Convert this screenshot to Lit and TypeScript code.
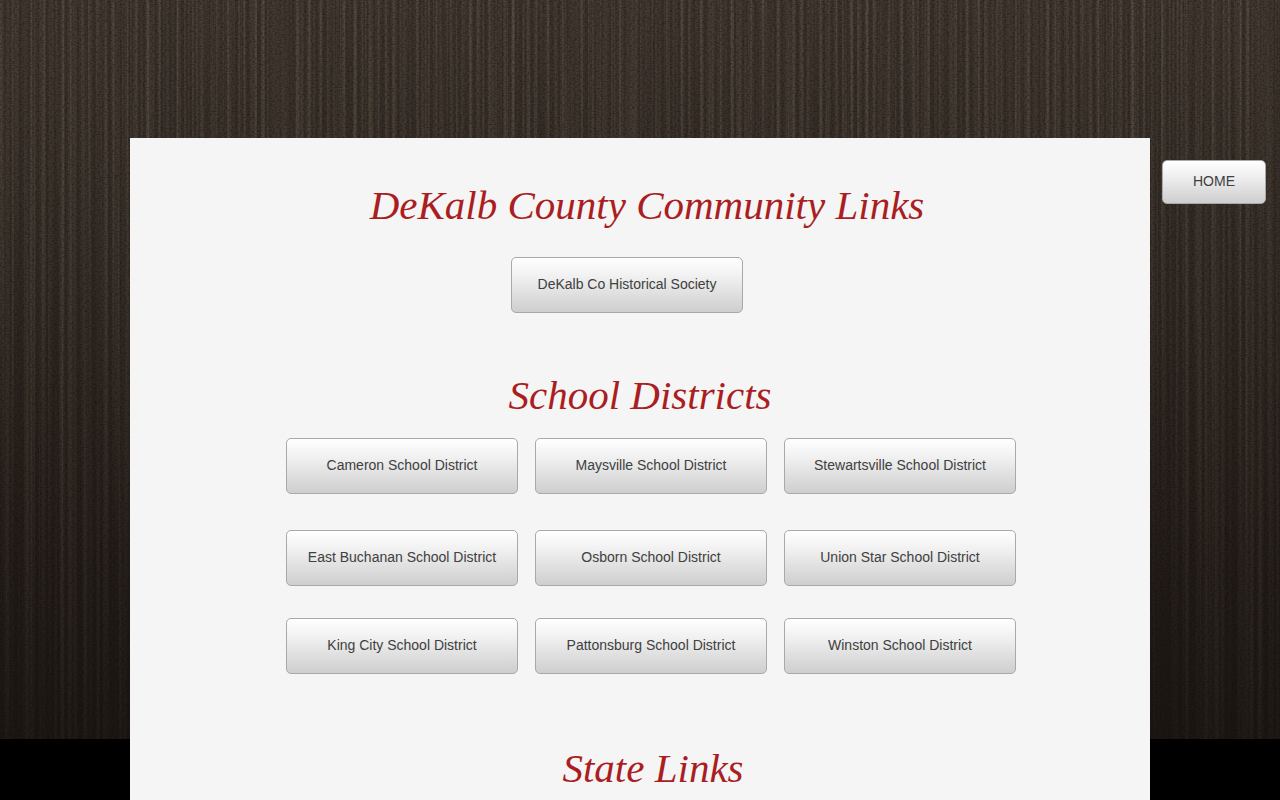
import { LitElement, html, css } from "lit";
import { customElement } from "lit/decorators.js";

const DISTRICTS = [
  "Cameron School District",
  "Maysville School District",
  "Stewartsville School District",
  "East Buchanan School District",
  "Osborn School District",
  "Union Star School District",
  "King City School District",
  "Pattonsburg School District",
  "Winston School District",
];

@customElement("app-root")
export class AppRoot extends LitElement {
  static styles = css`
    :host {
      display: block;
      font-family: "Liberation Sans", Arial, sans-serif;
    }
    .page {
      display: grid;
      grid-template-columns: minmax(0, 1fr);
      min-height: 100vh;
      background: #000;
    }
    .wood,
    .layout {
      grid-area: 1 / 1;
    }
    .wood {
      display: block;
      width: 100%;
      height: 739px;
    }
    .layout {
      position: relative;
      display: grid;
      grid-template-columns: minmax(0, 1fr) minmax(0, 1020px) minmax(0, 1fr);
      padding-top: 138px;
    }
    .panel {
      grid-column: 2;
      background: #f5f5f5;
      padding-top: 40px;
    }
    .side {
      grid-column: 3;
      padding: 22px 0 0 12px;
    }
    h1,
    h2 {
      margin: 0;
      font: italic 400 41px/54px "Liberation Serif", "Times New Roman", serif;
      color: #aa1e22;
      text-align: center;
    }
    .title {
      padding-left: 14px;
    }
    .state {
      padding-left: 26px;
    }
    .single {
      display: flex;
      justify-content: center;
      padding: 25px 26px 55px 0;
    }
    .districts {
      display: grid;
      grid-template-columns: repeat(3, 232px);
      grid-template-rows: 60px 56px 56px;
      align-items: start;
      justify-content: center;
      gap: 32px 17px;
      padding: 16px 0 67px 22px;
    }
    .btn {
      box-sizing: border-box;
      display: flex;
      align-items: center;
      justify-content: center;
      width: 232px;
      height: 56px;
      padding-bottom: 2px;
      border: 1px solid #a9a9a9;
      border-radius: 5px;
      background: linear-gradient(#fff, #f0f0f0 35%, #cecece);
      color: #404040;
      font-size: 14px;
      line-height: 16px;
      text-decoration: none;
      white-space: nowrap;
    }
    .home {
      width: 104px;
      height: 44px;
    }
  `;

  render() {
    return html`
      <div class="page">
        <svg class="wood" aria-hidden="true">
          <defs>
            <linearGradient id="shade" x1="0" y1="0" x2="0" y2="1">
              <stop offset="0" stop-color="#0d0807" stop-opacity="0" />
              <stop offset="0.2" stop-color="#0d0807" stop-opacity="0.12" />
              <stop offset="0.5" stop-color="#0d0807" stop-opacity="0.34" />
              <stop offset="0.75" stop-color="#0d0807" stop-opacity="0.54" />
              <stop offset="1" stop-color="#0d0807" stop-opacity="0.68" />
            </linearGradient>
            <filter id="streaks" x="0" y="0" width="100%" height="100%" color-interpolation-filters="sRGB">
              <feTurbulence type="fractalNoise" baseFrequency="0.26 0.001" numOctaves="3" seed="7" />
              <feColorMatrix values="0 0 0 0 0.42  0 0 0 0 0.38  0 0 0 0 0.32  2 0 0 0 -0.8" />
            </filter>
            <filter id="grain" x="0" y="0" width="100%" height="100%" color-interpolation-filters="sRGB">
              <feTurbulence type="fractalNoise" baseFrequency="0.4 0.7" numOctaves="2" seed="3" />
              <feColorMatrix values="0 0 0 0 0  0 0 0 0 0  0 0 0 0 0  0.7 0 0 0 -0.26" />
            </filter>
          </defs>
          <rect width="100%" height="100%" fill="#3a312b" />
          <rect width="100%" height="100%" filter="url(#streaks)" opacity="0.8" />
          <rect width="100%" height="100%" filter="url(#grain)" />
          <rect width="100%" height="100%" fill="url(#shade)" />
        </svg>
        <div class="layout">
          <main class="panel">
            <h1 class="title">DeKalb County Community Links</h1>
            <div class="single"><a class="btn" href="#">DeKalb Co Historical Society</a></div>
            <h2>School Districts</h2>
            <nav class="districts" aria-label="School Districts">
              ${DISTRICTS.map((name) => html`<a class="btn" href="#">${name}</a>`)}
            </nav>
            <h2 class="state">State Links</h2>
          </main>
          <nav class="side" aria-label="Site"><a class="btn home" href="#">HOME</a></nav>
        </div>
      </div>
    `;
  }
}
